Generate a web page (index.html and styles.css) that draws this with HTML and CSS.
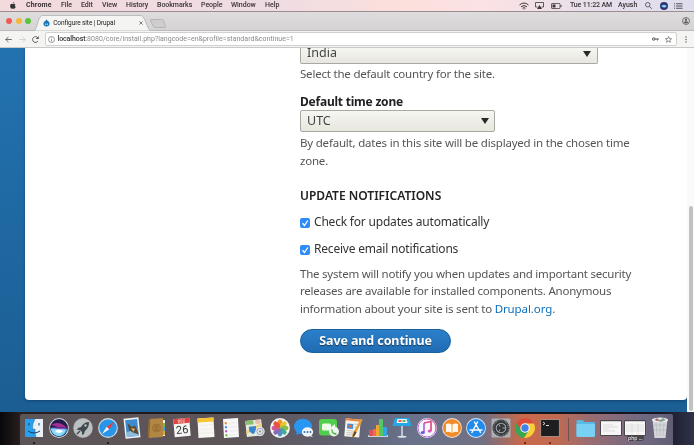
FILE: index.html
```html
<!DOCTYPE html>
<html lang="en">
<head>
<meta charset="utf-8">
<title>Configure site | Drupal</title>
<link rel="stylesheet" href="styles.css">
</head>
<body>
<header class="menubar">
  <svg class="apple" viewBox="0 0 14 16"><path fill="#333" d="M9.800 0c.1 1.800-1.300 3.300-2.900 3.300C6.700 1.700 8.200.2 9.800 0zM7 4.500c.8 0 1.700-.8 3.100-.8 1.100 0 2.200.6 2.800 1.500-2.500 1.500-2 4.900.5 5.900-.7 2-2 4.300-3.600 4.300-1 0-1.500-.6-2.700-.6s-1.700.6-2.700.6C2.300 15.400.3 12 .3 8.900c0-3.200 2-5 3.900-5 1.200 0 2.100.6 2.800.6z"/></svg>
  <nav class="menus"><b>Chrome</b><span>File</span><span>Edit</span><span>View</span><span>History</span><span>Bookmarks</span><span>People</span><span>Window</span><span>Help</span></nav>
  <div class="status">
    <svg class="wifi" viewBox="0 0 20 16" fill="none" stroke="#3c3638" stroke-width="2"><path d="M1 6q9-8 18 0M4 9.500q6-5 12 0M7 12.500q3-2.500 6 0"/><circle cx="10" cy="14" r="1" fill="#3c3638" stroke="none"/></svg>
    <svg class="airplay" viewBox="0 0 18 14"><path d="M5 10H1V1h16v9h-4" fill="none" stroke="#3c3638" stroke-width="1.600"/><path d="M9 6l5 8H4z" fill="#3c3638"/></svg>
    <svg class="battery" viewBox="0 0 22 12"><rect x="1" y="1" width="17" height="10" rx="1" fill="none" stroke="#3c3638" stroke-width="1.500"/><path d="M3 3h6v6H3zM19 4h2v4h-2z" fill="#3c3638"/></svg>
    <span class="clock">Tue 11:22 AM</span><span class="user">Ayush</span>
    <svg class="search" viewBox="0 0 14 14" fill="none" stroke="#3c3638" stroke-width="1.500"><circle cx="5.500" cy="5.500" r="4.500"/><path d="M9 9l4.500 4.500"/></svg>
    <svg class="siri" viewBox="0 0 16 16"><circle cx="8" cy="8" r="8" fill="#30336c"/><path d="M2 8q6-5 12 0-5 7-12 0z" fill="#4eb6ed"/><path d="M4 8q4-2 8 0-3 3-8 0z" fill="#d9e5ff"/></svg>
    <svg class="list" viewBox="0 0 18 12" stroke="#3c3638" stroke-width="1.700"><path d="M0 1.500h2M4 1.500h13M0 6h2M4 6h13M0 10.500h2M4 10.500h13"/></svg>
  </div>
</header>
<section class="tabs">
  <div class="lights"><i class="red"></i><i class="yellow"></i><i class="green"></i></div>
  <div class="tab">
    <svg class="tab-shape" viewBox="0 0 120 16" preserveAspectRatio="none"><path d="M0 16C3 15 4 2 8 .5H109C113 1 115 15 119 16z" fill="#f4f4f3" stroke="#aaa8a9" stroke-width=".7"/></svg>
    <div class="tab-content">
      <svg class="drop" viewBox="0 0 16 16"><path d="M8 0c1 3 7 4 7 9a7 7 0 01-14 0C1 5 6 4 8 0z" fill="#1875b8"/><path d="M4 11q2-3 4-1 2-2 4 0-1 3-4 1-3 2-4 0z" fill="#e8f4fb"/></svg>
      <span class="tab-title">Configure site | Drupal</span>
      <svg class="close" viewBox="0 0 10 10" stroke="#555" stroke-width="1.900"><path d="M1 1l8 8M9 1L1 9"/></svg>
    </div>
  </div>
  <svg class="newtab" viewBox="0 0 16 9"><path d="M1 .5h11q1 0 1.500 1l2 6q.3 1-.8 1H5q-1 0-1.500-1L.5 1.500Q.2.500 1 .5z" fill="#cfcdce" stroke="#aaa8a9" stroke-width=".7"/></svg>
  <svg class="profile" viewBox="0 0 16 16"><circle cx="8" cy="8" r="7" fill="none" stroke="#5c5c5c" stroke-width="1.600"/><circle cx="8" cy="5.500" r="2.300" fill="#5c5c5c"/><path d="M3 10q5-3 10 0-5 6-10 0z" fill="#5c5c5c"/></svg>
</section>
<section class="toolbar">
  <svg class="nav-icon" viewBox="0 0 14 14" fill="none" stroke="#555" stroke-width="1.700"><path d="M13.500 7H1.500M7 1.500L1.500 7 7 12.500"/></svg>
  <svg class="nav-icon" viewBox="0 0 14 14" fill="none" stroke="#ccc" stroke-width="1.700"><path d="M.5 7h12M7 1.500L12.500 7 7 12.500"/></svg>
  <svg class="nav-icon" viewBox="0 0 14 14" fill="none" stroke="#555" stroke-width="1.800"><path d="M12 10A5.800 5.800 0 1 1 11.500 3.500"/><path d="M13.500 0v6h-6z" fill="#555" stroke="none"/></svg>
  <div class="omnibox">
    <svg class="info" viewBox="0 0 14 14" fill="none" stroke="#666" stroke-width="1.300"><circle cx="7" cy="7" r="6"/><path d="M7 6v5M7 3v1.600"/></svg>
    <span class="url"><b>localhost</b>:8080/core/install.php?langcode=en&amp;profile=standard&amp;continue=1</span>
    <svg class="key" viewBox="0 0 14 8" fill="none" stroke="#555" stroke-width="2"><circle cx="3.500" cy="4" r="2.500"/><path d="M6 4h7.500M11 4v3"/></svg>
    <svg class="star" viewBox="0 0 14 14" fill="none" stroke="#555" stroke-width="1.300"><path d="M7 1l1.700 4.200 4.500.3-3.500 2.900 1.200 4.400L7 10.300l-3.900 2.500 1.200-4.400L.8 5.500l4.500-.3z"/></svg>
  </div>
  <svg class="dots" viewBox="0 0 4 14" fill="#555"><circle cx="2" cy="2" r="1.400"/><circle cx="2" cy="7" r="1.400"/><circle cx="2" cy="12" r="1.400"/></svg>
</section>
<main class="page">
  <div class="card">
    <form class="form">
      <div class="select country"><span>India</span><i class="arrow"></i></div>
      <p class="desc d1">Select the default country for the site.</p>
      <p class="label">Default time zone</p>
      <div class="select zone"><span>UTC</span><i class="arrow"></i></div>
      <p class="desc d2">By default, dates in this site will be displayed in the chosen time<br>zone.</p>
      <h2 class="heading">UPDATE NOTIFICATIONS</h2>
      <div class="check"><svg class="box" viewBox="0 0 10 10"><rect width="10" height="10" rx="2" fill="#2f8bf5"/><path d="M2.500 5.200l2 2.300 3.300-5" fill="none" stroke="#fff" stroke-width="1.300"/></svg><span>Check for updates automatically</span></div>
      <div class="check"><svg class="box" viewBox="0 0 10 10"><rect width="10" height="10" rx="2" fill="#2f8bf5"/><path d="M2.500 5.200l2 2.300 3.300-5" fill="none" stroke="#fff" stroke-width="1.300"/></svg><span>Receive email notifications</span></div>
      <p class="desc d3">The system will notify you when updates and important security<br>releases are available for installed components. Anonymous<br>information about your site is sent to <a>Drupal.org</a>.</p>
      <button class="save" type="button">Save and continue</button>
    </form>
  </div>
  <div class="scrollbar"><div class="thumb"></div></div>
</main>
<footer class="desktop">
  <div class="dock">
    <div class="app running"><svg viewBox="0 0 20 20"><path d="M1 1h18v18H1z" fill="#e9f1f8"/><path d="M1 1h10Q8 6 8.500 11H11q0 5 1 8H1z" fill="#28a0ee"/><path d="M5 5v2.500M15 5v2.500M4 13q6 4 12 0" fill="none" stroke="#153d61" stroke-width="1"/><path d="M11 1Q8 6 8.500 11H11q0 5 1 8" fill="none" stroke="#27537a" stroke-width=".4"/></svg></div>
    <div class="app"><svg viewBox="0 0 20 20"><circle cx="10" cy="10" r="9.900" fill="#d3d1dc"/><circle cx="10" cy="10" r="8.900" fill="#211c4b"/><path d="M2 7q8-5 16 3-8 0-16-3z" fill="#a62d92"/><path d="M1.500 10q9-1 17 1-2 7-8.500 7.500Q2 17 1.500 10z" fill="#38a9dd"/><path d="M2 11q8-2 15 1-3 6-7 6-6 0-8-7z" fill="#8fdaf5"/><path d="M6 13q4-3 8 0-4 4-8 0z" fill="#fff"/><path d="M2 9.500q9 0 16 1-8 2-16-1z" fill="#8e49cf"/></svg></div>
    <div class="app"><svg viewBox="0 0 20 20"><circle cx="10" cy="10" r="9.900" fill="#a2a8ab"/><circle cx="10" cy="10" r="9.200" fill="#bbc1c3"/><path d="M16 4q-5 0-8 5l-3 1-1 2 3 0 2 2 0 3 2-1 1-3q4-3 4-9z" fill="#42484c"/><circle cx="12.500" cy="7.500" r="1.200" fill="#b7bec1"/><path d="M4 16l3-3" stroke="#42484c" stroke-width="1.500"/></svg></div>
    <div class="app running"><svg viewBox="0 0 20 20"><circle cx="10" cy="10" r="9.900" fill="#d8dde1"/><circle cx="10" cy="10" r="8.800" fill="#2795e8"/><path d="M16 4l-4.700 7.300-2.600-2.600z" fill="#ef3e36"/><path d="M4 16l4.700-7.300 2.600 2.600z" fill="#f5f5f5"/></svg></div>
    <div class="app"><svg viewBox="0 0 20 20"><g transform="rotate(-6 10 10)"><path d="M2.500 0h15v20h-15z" fill="#f1f2f2"/><path d="M4 1.500h12v17H4z" fill="#3d8ace"/><path d="M4 14l12-3v7.500H4z" fill="#8ebbdb"/><path d="M6 5l4 4 3-1 2 4 1 5-5-2-4-3z" fill="#5a4831"/><path d="M9 10l4 1-2 3z" fill="#deb35a"/></g></svg></div>
    <div class="app"><svg viewBox="0 0 20 20"><path d="M14 2h4v16h-4z" fill="#eee"/><path d="M16 5h2v4h-2z" fill="#78b94c"/><path d="M16 9h2v4h-2z" fill="#47a5d1"/><path d="M16 13h2v4h-2z" fill="#e5a23d"/><path d="M2 1l14-1v19L1 20z" fill="#b28643"/><path d="M2 1h1.300L2.300 20H1z" fill="#8e6630"/><circle cx="9.500" cy="10" r="4" fill="#ab7d3b" stroke="#936b32" stroke-width=".7"/><circle cx="9.500" cy="8.800" r="1.200" fill="#906a33"/><path d="M7.500 12q2-2 4 0-2 1.500-4 0z" fill="#906a33"/></svg></div>
    <div class="app"><svg viewBox="0 0 20 20"><g transform="rotate(-5 10 10)"><path d="M2 .5h16v18H2z" fill="#f5f5f4"/><path d="M2 .5h16v5H2z" fill="#df4440"/><text x="10" y="4.500" class="cal-month">DEC</text><text x="10" y="15.500" class="cal-day">26</text></g></svg></div>
    <div class="app"><svg viewBox="0 0 20 20"><g transform="rotate(-3 10 10)"><path d="M2 0h16v19.500H2z" fill="#f8f7f1"/><path d="M2 0h16v4H2z" fill="#f5c631"/><path d="M3 7h14M3 11h14M3 15h14" stroke="#e2e2df" stroke-width=".5"/></g></svg></div>
    <div class="app"><svg viewBox="0 0 20 20"><g transform="rotate(-3 10 10)"><path d="M2.500 .5h15v19h-15z" fill="#f8f8f8"/><circle cx="5" cy="5" r="1.200" fill="#ef8d25"/><circle cx="5" cy="9" r="1.200" fill="#3b9de3"/><circle cx="5" cy="13" r="1.200" fill="#b758d2"/><circle cx="5" cy="17" r="1.200" fill="#65c642"/><path d="M8 5h8M8 9h8M8 13h8M8 17h8" stroke="#dedede" stroke-width=".6"/></g></svg></div>
    <div class="app"><svg viewBox="0 0 20 20"><g transform="rotate(-6 10 10)"><path d="M1 2h16v16H1z" fill="#e6ebda"/><path d="M1 2h8v4H1z" fill="#8bbd6e"/><path d="M1 12L17 6v3L1 15z" fill="#f0d27a"/><path d="M4 8h7v5l-3.500 3L4 13z" fill="#3b85ce"/><path d="M11 2h5v4h-5z" fill="#ebbaaa"/></g><circle cx="15" cy="13.500" r="4.700" fill="#e6e8ea"/><circle cx="15" cy="13.500" r="3.100" fill="none" stroke="#8c949d" stroke-width=".8"/><circle cx="15" cy="13.500" r="1" fill="#7b838b"/></svg></div>
    <div class="app"><svg viewBox="0 0 20 20"><circle cx="10" cy="10" r="9.900" fill="#f7f6f3"/><g class="petals"><ellipse cx="10" cy="5.500" rx="2.500" ry="4" fill="#f49b28"/><ellipse cx="10" cy="5.500" rx="2.500" ry="4" fill="#f0cf2f" transform="rotate(45 10 10)"/><ellipse cx="10" cy="5.500" rx="2.500" ry="4" fill="#95c545" transform="rotate(90 10 10)"/><ellipse cx="10" cy="5.500" rx="2.500" ry="4" fill="#48b794" transform="rotate(135 10 10)"/><ellipse cx="10" cy="5.500" rx="2.500" ry="4" fill="#5395d1" transform="rotate(180 10 10)"/><ellipse cx="10" cy="5.500" rx="2.500" ry="4" fill="#8c6dbe" transform="rotate(225 10 10)"/><ellipse cx="10" cy="5.500" rx="2.500" ry="4" fill="#d35b9d" transform="rotate(270 10 10)"/><ellipse cx="10" cy="5.500" rx="2.500" ry="4" fill="#ed5747" transform="rotate(315 10 10)"/></g></svg></div>
    <div class="app"><svg viewBox="0 0 20 20"><ellipse cx="9" cy="8.500" rx="9" ry="7.800" fill="#2997f2"/><path d="M3 13l-1 4 5-2z" fill="#2997f2"/><ellipse cx="13.500" cy="14" rx="5.700" ry="4.700" fill="#f2f5f8"/><path d="M17 17l2 2-4-1z" fill="#f2f5f8"/><g fill="#3877b0"><circle cx="10.500" cy="14" r="1"/><circle cx="13.500" cy="14" r="1"/><circle cx="16.500" cy="14" r="1"/></g></svg></div>
    <div class="app"><svg viewBox="0 0 20 20"><rect y="1" width="18" height="16.500" rx="3" fill="#51ce4b"/><rect x="3" y="5.500" width="9" height="7" rx="1.500" fill="#effbea"/><path d="M12 9l4-3v7z" fill="#effbea"/><circle cx="15" cy="13.500" r="4.900" fill="#f0f3f0"/><path d="M12.500 11q-1 5 4.500 6l1-1-2-1.500-1 .5-1.500-2 .5-1z" fill="#50bb49"/></svg></div>
    <div class="app"><svg viewBox="0 0 20 20"><g transform="rotate(5 10 10)"><path d="M2 1h15v18H2z" fill="#f5f3ed"/><path d="M2 1h15v2H2z" fill="#e9853b"/><path d="M4 6h6v5H4z" fill="#3c91d7"/><circle cx="7" cy="8.500" r="1.600" fill="#f0683d"/><path d="M11 6h4M11 9h3M4 13h9M4 15h9M4 17h8" stroke="#aaa" stroke-width=".6"/><path d="M17 0l2 1-7 17-2 1v-3z" fill="#eb9b35"/><path d="M12 13l2 1-2 4-2 1z" fill="#554331"/></g></svg></div>
    <div class="app"><svg viewBox="0 0 20 20"><path d="M0 17h20v2H0z" fill="#ccd1dc"/><path d="M1 12h4v6H1z" fill="#e0505d"/><path d="M5 11h3v7H5z" fill="#ef6d4d"/><path d="M8 7h3v11H8z" fill="#f0a72d"/><path d="M11 1h4v17h-4z" fill="#55c665"/><path d="M15 9h4v9h-4z" fill="#33a5e5"/></svg></div>
    <div class="app"><svg viewBox="0 0 20 20"><path d="M3 0h14l2.500 8H.5z" fill="#25a6e7"/><path d="M5.500 1h9l1 4h-11z" fill="#f5f6f6"/><path d="M6.500 2h3v2h-3z" fill="#e85b59"/><path d="M10.500 2h3v2h-3z" fill="#5eb867"/><path d="M9.300 8h1.400v10H9.300z" fill="#e1e7ed"/><ellipse cx="10" cy="18.700" rx="4.500" ry="1" fill="#d9e2e8"/></svg></div>
    <div class="app"><svg viewBox="0 0 20 20"><circle cx="10" cy="10" r="9.900" fill="#f8f6f8"/><circle cx="10" cy="10" r="9" fill="none" stroke="#b96ee2" stroke-width="1"/><path d="M10 1A9 9 0 0 1 18 14" fill="none" stroke="#f2668f" stroke-width="1"/><path d="M7 5l7-1.500V13" fill="none" stroke="#dd4d8b" stroke-width="1.700"/><path d="M7 5v9" stroke="#a454dd" stroke-width="1.500"/><ellipse cx="5.800" cy="14.500" rx="2" ry="1.600" fill="#655be2"/><ellipse cx="12.600" cy="13" rx="2" ry="1.600" fill="#d95dc0"/></svg></div>
    <div class="app"><svg viewBox="0 0 20 20"><circle cx="10" cy="10" r="9.900" fill="#efe4dc"/><circle cx="10" cy="10" r="9" fill="#f28c28"/><path d="M4 6q3-1 5.600.5V15Q7 13 4 14zM16 6q-3-1-5.600.5V15Q13 13 16 14z" fill="#fff8ed"/></svg></div>
    <div class="app"><svg viewBox="0 0 20 20"><circle cx="10" cy="10" r="9.900" fill="#dce7f2"/><circle cx="10" cy="10" r="9" fill="#218bed"/><path d="M11.500 4L6 14.500M8.500 4l6 10.500M4 12h12" fill="none" stroke="#f6faff" stroke-width="1.500" stroke-linecap="round"/></svg></div>
    <div class="app"><svg viewBox="0 0 20 20"><rect x=".5" y=".5" width="19" height="19" rx="1" fill="#acb0b4"/><circle cx="10" cy="10" r="7.800" fill="none" stroke="#34383b" stroke-width="1.500" stroke-dasharray="1.200 .4"/><circle cx="10" cy="10" r="7.200" fill="#34383b"/><circle cx="10" cy="10" r="4.800" fill="none" stroke="#a0a4a8" stroke-width="1.100"/><path d="M10 10h5M10 10L7.500 6M10 10l-2.500 4" stroke="#a0a4a8" stroke-width="1"/><circle cx="10" cy="10" r="1.500" fill="#303336"/></svg></div>
    <div class="app running hot"><svg viewBox="0 0 20 20"><circle cx="10" cy="10" r="10" fill="#de4b3c"/><path d="M1.300 5A10 10 0 0 0 9 19.900L13.900 12.300 10 14.500 6.100 12.200z" fill="#35a852"/><path d="M10 5.500h8.900A10 10 0 0 1 9 19.900l4.900-7.600L14 8z" fill="#f9cf36"/><circle cx="10" cy="10" r="4.700" fill="#fff"/><circle cx="10" cy="10" r="3.700" fill="#4282e7"/></svg></div>
    <div class="app running hot"><svg viewBox="0 0 20 20"><rect x=".4" y="1.300" width="19.200" height="17.400" rx="1" fill="#a2928c"/><path d="M1.100 2h17.800v16H1.100z" fill="#1e1e20"/><path d="M3 4l2 1.500L3 7M6 7.500h3" stroke="#eee" stroke-width=".9" fill="none"/></svg></div>
    <div class="separator"></div>
    <div class="app"><svg viewBox="0 0 20 20"><path d="M.5 3q0-1 1-1h5l2 2H18q1 0 1 1v13H.5z" fill="#58b9e5"/><path d="M.5 6H19v12q0 1-1 1H1.500q-1 0-1-1z" fill="#78d0f5"/></svg></div>
    <div class="app"><svg class="window" viewBox="0 0 22 16"><path d="M.5.500h21v15H.5z" fill="#f6f6f6" stroke="#4b474c"/><path d="M1 1h20v1H1z" fill="#d0d0d0"/><path d="M3 5h10M3 7h15M3 9h6M3 11h12" stroke="#ccc" stroke-width=".6"/></svg></div>
    <div class="app"><svg class="window" viewBox="0 0 22 16"><path d="M.5.500h21v15H.5z" fill="#f6f6f6" stroke="#4b474c"/><path d="M1 1h20v1H1z" fill="#d0d0d0"/><path d="M2 5h18M2 7h18M2 9h18M2 11h18M8 3v12M14 3v12" stroke="#ccc" stroke-width=".5"/></svg><span class="php">php ...</span></div>
    <div class="app"><svg class="trash" viewBox="0 0 18 22"><path d="M1.500 2h15L14.500 21h-11z" fill="#d4d6d9"/><path d="M5 5l1 14M9 5v14M13 5l-1 14M3 8h12M3.500 13h11" stroke="#aeb3ba" stroke-width=".6"/><ellipse cx="9" cy="3" rx="8" ry="2.500" fill="#eef0f1"/><path d="M3 3l3-2 3 2 3-2 3 2-5 2z" fill="#8f9b94"/><path d="M5 2l2 1-2 1z" fill="#cc5447"/></svg></div>
  </div>
</footer>
</body>
</html>
```
FILE: styles.css
```css
* { box-sizing: border-box; }
body {
  margin: 0;
  width: 694px;
  height: 445px;
  overflow: hidden;
  display: flex;
  flex-direction: column;
  font-family: "Noto Sans", sans-serif;
  background: #171619;
}
svg { display: block; flex: none; overflow: visible; }
p, h2 { margin: 0; }

.menubar {
  height: 12px;
  flex: none;
  display: flex;
  align-items: center;
  padding-left: 10px;
  border-bottom: 1px solid #9b8d91;
  background: linear-gradient(90deg, #f3dadd, #eedce3 38%, #fbe0dc 58%, #fbe2e4 70%, #e7dfeb 85%, #dedded);
  color: #383235;
  font: 500 7px/11px Roboto, sans-serif;
  white-space: nowrap;
}
.apple { width: 6px; height: 7px; margin-right: 10px; }
.menus { display: grid; grid-template-columns: 35px 20px 21px 24px 31px 44px 30px 34px 20px; }
.menus b { letter-spacing: .15px; }
.menus span { letter-spacing: -.04px; }
.status { margin-left: auto; padding-right: 11px; display: flex; align-items: center; }
.wifi { width: 10px; height: 8px; margin-right: 6px; }
.airplay { width: 9px; height: 7px; margin-right: 7px; }
.battery { width: 11px; height: 6px; margin-right: 8px; }
.clock { width: 48px; letter-spacing: -.14px; }
.user { width: 27px; }
.search { width: 7px; height: 7px; margin-right: 8px; }
.siri { width: 8px; height: 8px; margin-right: 6px; }
.list { width: 9px; height: 6px; }

.tabs {
  height: 19px;
  flex: none;
  display: flex;
  align-items: flex-end;
  padding: 0 4px 0 6px;
  background: linear-gradient(#dedcdd, #d5d3d4);
  border-bottom: 1px solid #bbb;
}
.lights { display: flex; gap: 3.600px; align-self: center; }
.lights i { width: 6px; height: 6px; border-radius: 50%; }
.red { background: #ee5c54; }
.yellow { background: #f4b83d; }
.green { background: #59c43c; }
.tab { width: 118px; height: 16px; margin: 0 -2px -1px 3px; display: grid; }
.tab > * { grid-area: 1 / 1; }
.tab-shape { width: 118px; height: 16px; }
.tab-content { position: relative; display: flex; align-items: center; padding: 0 9px 1px 9px; }
.drop { width: 7px; height: 8px; margin-right: 3px; }
.tab-title { font: 6.500px/12px Roboto, sans-serif; letter-spacing: -.09px; color: #222; white-space: nowrap; }
.close { width: 4px; height: 4px; margin-left: auto; }
.newtab { width: 16px; height: 9px; margin: 0 0 2px 0; }
.profile { width: 8px; height: 8px; margin: 0 0 5px auto; }

.toolbar {
  height: 17px;
  flex: none;
  display: flex;
  align-items: center;
  padding: 0 7px 0 5px;
  background: #f4f4f3;
  border-bottom: 1px solid #c8c8c8;
}
.nav-icon { width: 7px; height: 7px; margin-right: 6.500px; }
.omnibox {
  width: 632px;
  height: 14px;
  margin-left: -1px;
  display: flex;
  align-items: center;
  padding: 0 4px 0 2px;
  background: #fff;
  border: 1px solid #d0d0d0;
  border-radius: 2px;
}
.info { width: 7px; height: 7px; margin-right: 3px; }
.url { font: 7px/12px Roboto, sans-serif; letter-spacing: .02px; color: #8b8b8b; white-space: nowrap; }
.url b { color: #333; font-weight: 500; letter-spacing: -.1px; }
.key { width: 7px; height: 4px; margin-left: auto; margin-right: 6px; }
.star { width: 7px; height: 7px; }
.dots { width: 2px; height: 7px; margin-left: auto; }

.page {
  height: 364px;
  flex: none;
  display: flex;
  overflow: hidden;
  background: linear-gradient(#2372b0, #1b5e93);
}
.card {
  width: 662px;
  height: 352px;
  margin-left: 25px;
  overflow: hidden;
  background: #fff;
  border-radius: 0 0 4px 4px;
  box-shadow: 0 1px 3px rgba(0, 30, 65, .4);
}
.form { margin-left: 275px; width: 350px; display: flex; flex-direction: column; align-items: flex-start; }
.select {
  display: flex;
  align-items: center;
  justify-content: space-between;
  border: 1px solid #a9a9a3;
  border-radius: 2px;
  padding: 0 5px 0 6px;
  background: linear-gradient(#f6f6f2, #e7e7df);
  color: #444;
  font-size: 12.500px;
  line-height: 15px;
}
.country { width: 298px; height: 16px; padding-bottom: 5px; border-top: 0; border-radius: 0 0 2px 2px; line-height: 10px; }
.country .arrow { margin: 1px 1px 0 0; }
.zone { width: 195px; height: 22px; margin-top: -1px; }
.zone .arrow { margin-top: 1px; }
.arrow { border: 4px solid transparent; border-top: 6px solid #292929; border-bottom: 0; }
.desc { font-size: 11.500px; line-height: 17.500px; letter-spacing: -.2px; color: #555; white-space: nowrap; }
.d1 { margin-top: .5px; }
.label { margin-top: 10.500px; height: 18px; font-size: 12px; line-height: 18px; letter-spacing: -.22px; font-weight: 700; color: #222; white-space: nowrap; }
.d2 { margin-top: 2.500px; }
.heading { margin-top: 17.500px; font-size: 12px; line-height: 18px; font-weight: 600; color: #222; white-space: nowrap; }
.check { display: flex; align-items: center; height: 18px; margin-top: 8px; font-size: 12px; letter-spacing: -.2px; color: #333; white-space: nowrap; }
.check + .check { margin-top: 9px; }
.box { width: 10px; height: 10px; margin: 2px 4px 0 0; }
.d3 { margin-top: 7px; letter-spacing: -.225px; }
.d3 a { color: #0c6fbd; letter-spacing: -.1px; }
.save {
  width: 151px;
  height: 24px;
  margin-top: 12px;
  padding: 0;
  border: 1px solid #185f9c;
  border-radius: 12px;
  background: linear-gradient(#2b80c9, #1f6cb3);
  color: #fff;
  font: 700 12.500px/20px "Noto Sans", sans-serif;
  letter-spacing: -.1px;
  text-shadow: 0 1px 1px rgba(0, 0, 0, .5);
  white-space: nowrap;
}
.scrollbar { width: 7px; padding: 158px 1px 0 2px; background: #fafafa; }
.thumb { width: 4px; height: 205px; border-radius: 2px; background: #c1c1c1; }

.desktop {
  height: 33px;
  flex: none;
  padding: 2px 0 0 20px;
  background: linear-gradient(90deg, #080709, #28201e 3%, #151217 50%, #141522 95%, #303349);
}
.dock {
  width: 653px;
  height: 31px;
  display: flex;
  padding: 4px 0 0 2px;
  border-radius: 2px 2px 0 0;
  background: linear-gradient(90deg, #5c5558, #5d5458 34%, #60606e 48%, #69728b 60%, #727082 71%, #c9694b 77%, #c26a51 82%, #9a6c70 87%, #716981 95%, #625e76);
}
.app { width: 24.560px; flex: none; display: flex; flex-direction: column; align-items: center; }
.app > svg { width: 20px; height: 20px; }
.app > .window { width: 22px; height: 16px; margin-top: 2px; }
.app > .trash { width: 18px; height: 22px; margin-top: -1px; }
.running::after { content: ""; width: 2px; height: 2px; margin-top: 4px; border-radius: 50%; background: #0d0d0e; }
.hot::after { background: #501c12; }
.separator { width: 1px; height: 23px; margin: 0 5.500px; background: #705255; }
.php { margin-top: -1px; font: 5px/6px "Noto Sans", sans-serif; color: #fff; background: #4a444b; border-radius: 3px; padding: 0 1px; white-space: nowrap; }
.cal-month { font: 4px Roboto, sans-serif; fill: #fff; text-anchor: middle; }
.cal-day { font: 11px Roboto, sans-serif; fill: #333; text-anchor: middle; }
.petals { mix-blend-mode: multiply; }
```
